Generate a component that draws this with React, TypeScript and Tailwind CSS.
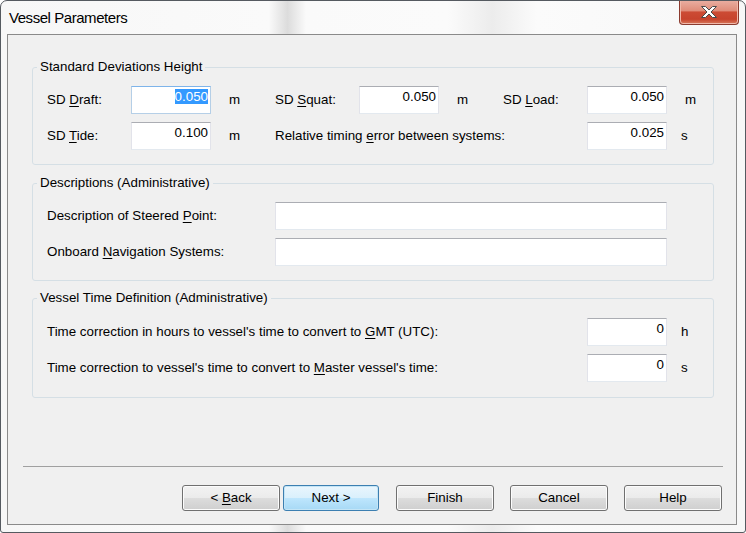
import React from "react";
import clsx from "clsx";

const font = "font-['Liberation_Sans',Arial,sans-serif]";

function Group({ title, className, bodyClass, children }: { title: string; className?: string; bodyClass?: string; children: React.ReactNode }) {
  return (
    <fieldset className={clsx("ml-[24px] mr-[22px] min-w-0 rounded-[3px] border border-[#d5dfe5]", className)}>
      <legend className="ml-[4px] px-[3px] leading-[16px]">{title}</legend>
      <div className={clsx("flex flex-col gap-[8px] pl-[14px]", bodyClass)}>{children}</div>
    </fieldset>
  );
}

function Box({ value, width = "w-[80px]", selected }: { value?: string; width?: string; selected?: boolean }) {
  return (
    <div
      className={clsx(
        "h-[28px] shrink-0 border bg-white pr-[2px] pt-[2px] text-right leading-[16px]",
        width,
        selected
          ? "border-[#b5cfe7] border-t-[#7eb4ea]"
          : "border-[#e2e3ea] border-t-[#abadb3] border-b-[#e3e9ef]"
      )}
    >
      {selected ? <span className="bg-[#3399ff] text-white">{value}</span> : value}
    </div>
  );
}

function Row({ children }: { children: React.ReactNode }) {
  return <div className="flex h-[28px] items-center">{children}</div>;
}

function Btn({ children, primary, className }: { children: React.ReactNode; primary?: boolean; className?: string }) {
  return (
    <div
      className={clsx(
        "flex h-[26px] items-center justify-center whitespace-pre rounded-[3px] border leading-[16px]",
        primary
          ? "border-[#3c7fb1] bg-[linear-gradient(#eaf6fd_0%,#d9f0fc_50%,#bee6fd_50%,#a7d9f5_100%)] shadow-[inset_0_0_0_1px_#c4e5f6]"
          : "border-[#707070] bg-[linear-gradient(#f2f2f2_0%,#ebebeb_50%,#dddddd_50%,#cfcfcf_100%)] shadow-[inset_0_0_0_1px_#fcfcfc]",
        className
      )}
    >
      {children}
    </div>
  );
}

export default function App() {
  return (
    <div
      className={clsx(
        "flex h-[533px] w-[746px] flex-col overflow-hidden rounded-t-[7px] rounded-b-[3px] border border-[#555a60] text-[13.35px] text-black",
        "bg-[linear-gradient(90deg,#f7f7f7_0%,#fafafa_36%,#dcdcdc_38.5%,#fafafa_41%,#fbfbfb_60%,#ececec_66%,#fbfbfb_72%,#f7f7f7_100%)]",
        font
      )}
    >
      <div className="flex h-[33px] shrink-0">
        <div className="flex items-center pl-[8px] pt-[2px] text-[15px] tracking-[-0.45px]">Vessel Parameters</div>
        <div className="ml-auto mr-[6px] -mt-px flex h-[25px] w-[60px] items-center justify-center rounded-b-[4px] border border-t-0 border-[#8b3b2f] bg-[linear-gradient(#eab0a3_0%,#df8c79_45%,#cc4b34_50%,#c7432d_80%,#d77a5c_100%)] shadow-[inset_0_0_0_1px_#f0b9ab]">
          <svg width="18" height="14" viewBox="0 0 18 14">
            <path
              d="M1.5 1.5h4l3.5 3.5 3.5-3.5h4l-5.5 5.5 5.5 5.5h-4L9 9l-3.5 3.5h-4L7 7z"
              fill="#ffffff"
              stroke="#4a4a4a"
              strokeWidth="1"
              strokeLinejoin="round"
            />
          </svg>
        </div>
      </div>

      <div className="mb-[7px] ml-[6px] mr-[8px] flex flex-1 flex-col border border-[#8a8a8a] bg-[#f0f0f0]">
        <Group title="Standard Deviations Height" className="mt-[24px]" bodyClass="pt-[11px] pb-[14px]">
          <Row>
            <span className="w-[84px]">SD <u className="underline-offset-2">D</u>raft:</span>
            <Box value="0.050" selected />
            <span className="w-[64px] pl-[18px]">m</span>
            <span className="w-[84px]">SD <u className="underline-offset-2">S</u>quat:</span>
            <Box value="0.050" />
            <span className="w-[64px] pl-[18px]">m</span>
            <span className="w-[84px]">SD <u className="underline-offset-2">L</u>oad:</span>
            <Box value="0.050" />
            <span className="pl-[18px]">m</span>
          </Row>
          <Row>
            <span className="w-[84px]">SD <u className="underline-offset-2">T</u>ide:</span>
            <Box value="0.100" />
            <span className="w-[64px] pl-[18px]">m</span>
            <span className="w-[312px]">
              Relative timing <u className="underline-offset-2">e</u>rror between systems:
            </span>
            <Box value="0.025" />
            <span className="pl-[14px]">s</span>
          </Row>
        </Group>

        <Group title="Descriptions (Administrative)" className="mt-[10px]" bodyClass="pt-[11px] pb-[14px]">
          <Row>
            <span className="w-[228px]">
              Description of Steered <u className="underline-offset-2">P</u>oint:
            </span>
            <Box width="w-[392px]" />
          </Row>
          <Row>
            <span className="w-[228px]">
              Onboard <u className="underline-offset-2">N</u>avigation Systems:
            </span>
            <Box width="w-[392px]" />
          </Row>
        </Group>

        <Group title="Vessel Time Definition (Administrative)" className="mt-[9px]" bodyClass="pt-[12px] pb-[15px]">
          <Row>
            <span className="w-[540px]">
              Time correction in hours to vessel's time to convert to <u className="underline-offset-2">G</u>MT (UTC):
            </span>
            <Box value="0" />
            <span className="pl-[14px]">h</span>
          </Row>
          <Row>
            <span className="w-[540px]">
              Time correction to vessel's time to convert to <u className="underline-offset-2">M</u>aster vessel's time:
            </span>
            <Box value="0" />
            <span className="pl-[14px]">s</span>
          </Row>
        </Group>

        <div className="flex-1" />
        <div className="ml-[15px] mr-[13px] h-px bg-[#a0a0a0]" />

        <div className="flex justify-end pb-[13px] pr-[14px] pt-[18px]">
          <Btn className="w-[98px]">
            {"< "}
            <u className="underline-offset-2">B</u>ack
          </Btn>
          <Btn primary className="ml-[3px] w-[96px]">
            {"Next >"}
          </Btn>
          <Btn className="ml-[17px] w-[98px]">Finish</Btn>
          <Btn className="ml-[16px] w-[98px]">Cancel</Btn>
          <Btn className="ml-[16px] w-[98px]">Help</Btn>
        </div>
      </div>
    </div>
  );
}
